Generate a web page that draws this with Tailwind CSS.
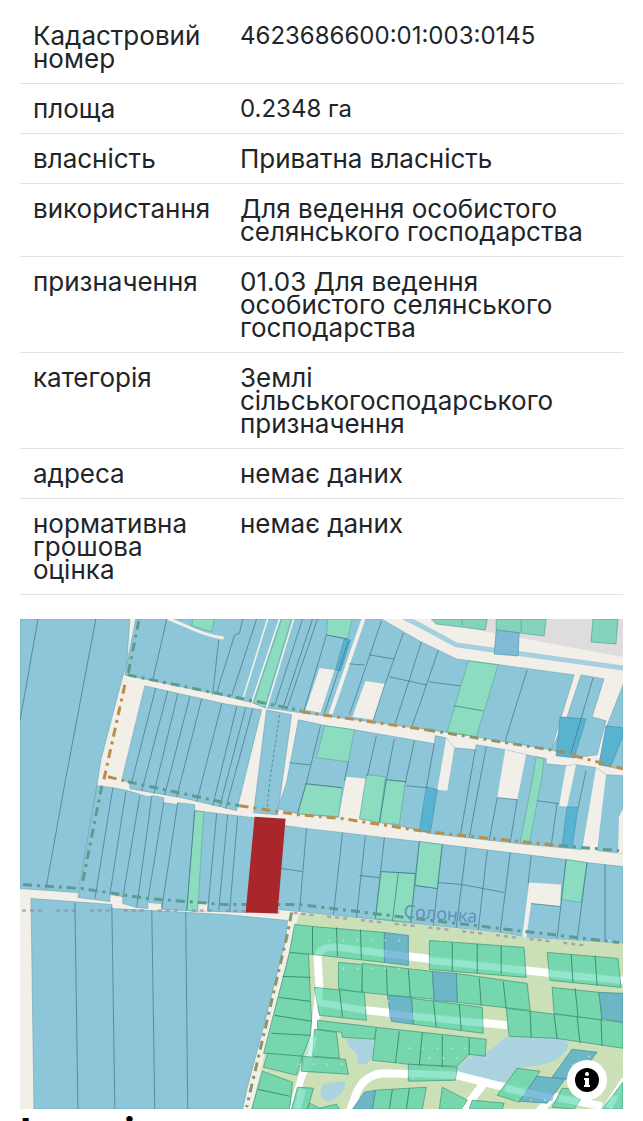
<!DOCTYPE html>
<html lang="uk">
<head>
  <meta charset="UTF-8" />
  <meta name="viewport" content="width=device-width, initial-scale=1.0" />
  <title>Кадастрова ділянка 4623686600:01:003:0145</title>
  <script src="https://cdn.jsdelivr.net/npm/@tailwindcss/browser@4"></script>
</head>
<body class="bg-white text-[#212529] font-['Inter','Noto_Sans',sans-serif] overflow-x-hidden">

  <main class="px-5 pt-[11px]">

    <!-- Parcel details -->
    <table class="w-full text-left text-[26px] leading-[23px]">
      <tbody>
        <tr class="border-b border-[#dee2e6]">
          <th scope="row" class="w-[207px] px-[13px] py-[13px] align-top font-normal">Кадастровий номер</th>
          <td class="px-[13px] py-[13px] align-top text-2xl leading-[23px]">4623686600:01:003:0145</td>
        </tr>
        <tr class="border-b border-[#dee2e6]">
          <th scope="row" class="px-[13px] py-[13px] align-top font-normal">площа</th>
          <td class="px-[13px] py-[13px] align-top text-2xl leading-[23px]">0.2348 га</td>
        </tr>
        <tr class="border-b border-[#dee2e6]">
          <th scope="row" class="px-[13px] py-[13px] align-top font-normal">власність</th>
          <td class="px-[13px] py-[13px] align-top">Приватна власність</td>
        </tr>
        <tr class="border-b border-[#dee2e6]">
          <th scope="row" class="px-[13px] py-[13px] align-top font-normal">використання</th>
          <td class="px-[13px] py-[13px] align-top">Для ведення особистого селянського господарства</td>
        </tr>
        <tr class="border-b border-[#dee2e6]">
          <th scope="row" class="px-[13px] py-[13px] align-top font-normal">призначення</th>
          <td class="px-[13px] py-[13px] align-top">01.03 Для ведення особистого селянського господарства</td>
        </tr>
        <tr class="border-b border-[#dee2e6]">
          <th scope="row" class="px-[13px] py-[13px] align-top font-normal">категорія</th>
          <td class="px-[13px] py-[13px] align-top">Землі сільськогосподарського призначення</td>
        </tr>
        <tr class="border-b border-[#dee2e6]">
          <th scope="row" class="px-[13px] py-[13px] align-top font-normal">адреса</th>
          <td class="px-[13px] py-[13px] align-top">немає даних</td>
        </tr>
        <tr class="border-b border-[#dee2e6]">
          <th scope="row" class="px-[13px] py-[13px] align-top font-normal">нормативна грошова оцінка</th>
          <td class="px-[13px] py-[13px] align-top">немає даних</td>
        </tr>
      </tbody>
    </table>

    <!-- Map -->
    <div class="relative mt-6">
      <svg class="block w-full" viewBox="20 618 604 491" role="img" aria-label="Карта ділянки">
        <rect x="20" y="618" width="604" height="491" fill="#f2efe9" />

        <!-- Settlement and river in the north-east -->
        <path d="M462 618H624V656L468 627Z" fill="#dddddd" />
        <path d="M404 616L420 624L457 644L624 667" fill="none" stroke="#a6d0df" stroke-width="5" />
        <g fill="#83d3bd" stroke="#4b9a8d" stroke-width=".6">
          <path d="M432 618H488L486 629L437 623Z" />
          <path d="M497 618H547L545 635L497 629Z" />
          <path d="M594 618H619L617 643L592 641Z" />
          <path d="M463 618V625M522 618V631" />
        </g>
        <path d="M497 629L520 632L519 655L495 653Z" fill="#7fbbd4" stroke="#4b8fa8" stroke-width=".6" />

        <!-- Fields -->
        <g fill="#8cc6d8" stroke="#6aa3b4" stroke-width=".6">
          <path d="M20 618H130L127 662L123 675L101 759L97 785L78 892L20 888Z" />
          <path d="M136 618H382L420 640L457 658L575 674L552 749L477 736L430 729L357 719L302 712L267 707L253 702L225 695L125 674Z" />
          <path d="M582 674L605 678L593 716L607 720L598 754L575 757L552 749L568 716Z" />
          <path d="M624 684L608 725L600 764L624 769Z" />
          <path d="M145 685L225 703L262 709L237 810L225 807L182 797L130 788V782L122 779Z" />
          <path d="M267 709L292 714L278 814L254 812Z" />
          <path d="M299 719L327 725L355 729L430 742L435 743L436 735L447 737L455 747L476 749L477 744L506 749L527 754L547 758V763L567 765L577 764L597 767L607 774L624 775V853L598 850L583 849L520 843L432 833L400 825L360 818L343 817L298 813L278 808L287 782Z" />
          <path d="M97 785L113 787L128 790L148 796L153 795L164 797V802L178 804V802L195 804V810L204 811L253 817L286 825L307 828L343 832L385 837L420 841L510 852L567 859L587 862L624 866V943L577 940L528 937L500 932L412 923L377 919L335 915L300 911L278 909L246 912L187 910L162 909V903L148 902V908L137 907L123 903V896L110 894V901L78 897Z" />
          <path d="M31 898L112 904V908L225 914L288 920L286 940L280 963L263 1030L247 1090L243 1109H34Z" />
        </g>

        <!-- Gaps between parcels -->
        <g fill="#f2efe9">
          <path d="M320 667L335 669L321 712L306 709Z" />
          <path d="M366 680L386 683L374 719L353 716Z" />
          <path d="M362 618H366L333 714L329 713Z" />
          <path d="M447 737L455 747L448 790L438 789Z" />
          <path d="M506 749L527 754L518 799L498 797Z" />
          <path d="M567 765L577 764L568 806L560 805Z" />
          <path d="M597 767L607 774L598 851L583 850Z" />
          <path d="M347 776L367 778L360 819L339 817Z" />
          <path d="M530 882L562 884L561 906L532 903L527 938L523 937Z" />
          <path d="M198 903H208V911H198Z" />
          <path d="M624 808L620 816L619 853H624Z" />
        </g>
        <path d="M165 616C185 624 205 635 224 637" fill="none" stroke="#f2efe9" stroke-width="3" />
        <path d="M280 618L252 702M294 618L267 707M268 618L243 699" fill="none" stroke="#f2efe9" stroke-width="1.6" />

        <!-- Green parcels -->
        <g fill="#8cdcc0" stroke="#5ba596" stroke-width=".6">
          <path d="M193 618H215L212 631L192 625Z" />
          <path d="M282 618H292L265 707L254 702Z" />
          <path d="M328 618H353L348 638L327 634Z" />
          <path d="M469 660L499 664L477 736L448 731Z" />
          <path d="M325 725L355 729L349 761L317 757Z" />
          <path d="M306 783L343 787L339 816L298 813Z" />
          <path d="M367 774L386 776L380 822L360 818Z" />
          <path d="M387 779L406 781L400 824L380 822Z" />
          <path d="M537 756L545 758L543 775L530 844L521 842L534 775Z" />
          <path d="M195 810L204 811L198 911L187 910Z" />
          <path d="M382 871L416 873L412 922L376 918Z" />
          <path d="M420 841L443 844L438 888L416 885Z" />
          <path d="M567 859L588 862L582 902L562 899Z" />
        </g>

        <!-- Overlapping parcels -->
        <g fill="#58b3d1" stroke="#3f8fae" stroke-width=".6">
          <path d="M345 638L351 639L341 670L336 669Z" />
          <path d="M561 716L587 718L575 757L557 755Z" />
          <path d="M607 725L624 727V735L612 765L600 764Z" />
          <path d="M427 786L438 789L431 832L420 830Z" />
          <path d="M568 806L579 807L573 847L563 846Z" />
        </g>

        <!-- Parcel borders -->
        <g fill="none" stroke="#3f7385" stroke-width=".7">
          <path d="M38 618L20 720M96 618L65 782L46 888" />
          <path d="M167 618L153 679M219 639L213 694M243 618L240 632L235 634L220 682L217 693M257 618L232 695M303 618L275 705M313 618L283 708M318 618L287 709M327 634L304 711M349 640L325 712M327 634L348 638" />
          <path d="M382 620L350 714M404 632L385 685L374 719M422 641L410 679L395 725M439 649L420 705L412 727M370 654L395 658M350 663L365 664M390 676L427 684M430 681L461 685M455 705L484 710M528 669L506 740M594 677L572 752" />
          <path d="M156 687L132 781M168 690L142 790M178 693L154 793M190 696L165 794M202 698L177 796M222 703L197 801M237 706L213 805M253 708L226 808M246 707L220 806" />
          <path d="M280 714L270 782L267 813" stroke-dasharray="3 2" />
          <path d="M290 762L310 764M321 725L307 782L298 813M349 761L345 780M306 783L343 787M377 735L368 775M395 738L387 779L380 822M415 740L406 782M387 779L407 781M407 785L427 787M435 743L427 787" />
          <path d="M476 749L461 835M487 746L470 837M498 797L490 840M518 799L511 842M538 800L560 803M558 803L552 846M587 770L579 807M498 797L518 799" />
          <path d="M113 787L95 898M126 791L110 894M140 795L123 897M152 796L137 906M164 802L148 900M178 802L162 908M195 810L187 910M217 813L208 910M228 814L219 910M238 816L230 911" />
          <path d="M307 828L300 910M282 868L303 871M343 832L334 914M366 835L357 917M385 837L376 918M360 875L380 877M382 871L416 873M399 872L393 921M420 841L411 922M416 885L438 888" />
          <path d="M443 844L434 925M467 847L457 927M488 850L479 930M511 852L501 932M439 882L463 884L505 892M532 855L529 883M588 862L578 940M567 859L558 938M606 864V941M532 903L561 906" />
          <path d="M75 902L78 1109M112 906L115 1109M152 910L155 1109M186 911L188 1109" />
        </g>

        <!-- Village -->
        <path d="M300 912L412 923L500 932L528 937L624 943V1109H252L292 940Z" fill="#cce0b8" />
        <g fill="#aad3df">
          <path d="M458 1068L472 1055L487 1053L508 1036L563 1038Q572 1042 567 1051Q558 1062 540 1065L518 1068L503 1085L460 1072Z" />
          <path d="M346 1038L374 1040L373 1057Q367 1067 357 1063Q361 1053 350 1048Z" />
          <path d="M323 1085Q334 1080 346 1082Q345 1095 330 1101Q320 1099 321 1093Z" />
        </g>
        <g fill="none" stroke="#ffffff" stroke-width="8" stroke-linejoin="round">
          <path d="M624 980L527 970L410 956L340 947Q319 944 318 957L320 987L317 1017" />
          <path d="M317 1013L312 1053L302 1077L292 1112" stroke-width="7" />
          <path d="M318 1002L367 1010L440 1018L508 1025" />
          <path d="M350 1112L357 1093Q365 1074 385 1073L457 1075L497 1085L603 1106" />
          <path d="M484 1084L463 1111M556 1094L540 1111M626 1080L605 1112" />
        </g>

        <g fill="#66d3aa" fill-opacity=".85" stroke="#3a9577" stroke-width=".7">
          <path d="M295 924L313 926L385 932V962L313 954L290 952Z" />
          <path d="M430 940L525 947L527 977L430 969Z" />
          <path d="M548 952L619 958L622 987L551 980Z" />
          <path d="M290 952L309 954L311 1000L312 1020L311 1035L303 1056L264 1053Z" />
          <path d="M268 1053L303 1056L297 1075L264 1067Z" />
          <path d="M263 1071L293 1082L290 1109H252Z" />
          <path d="M339 962L363 964L362 993L339 988Z" />
          <path d="M363 963L433 971L435 999L363 992Z" />
          <path d="M457 973L528 983L531 1010L458 1002Z" />
          <path d="M553 987L600 992L603 1020L555 1013Z" />
          <path d="M315 987L365 992L367 1020L320 1015Z" />
          <path d="M412 998L483 1007L484 1033L414 1024Z" />
          <path d="M507 1008L557 1014L624 1022V1048L557 1038L510 1036Z" />
          <path d="M318 1020L377 1027L375 1039L343 1037L342 1032L318 1029Z" />
          <path d="M315 1029L337 1032L340 1058L313 1056Z" />
          <path d="M377 1027L487 1039L486 1056L470 1054L458 1066L409 1064L373 1060Z" />
          <path d="M409 1064L458 1067L456 1080L409 1081Z" />
          <path d="M303 1056L346 1059L349 1074L302 1071Z" />
          <path d="M298 1087L314 1088L308 1109H292Z" />
          <path d="M310 1103L320 1108L337 1104L340 1109H308Z" />
          <path d="M376 1090L427 1087L423 1109H373Z" />
          <path d="M443 1087L468 1100L462 1109H440Z" />
          <path d="M473 1100L505 1103L503 1109H470Z" />
          <path d="M518 1068L541 1071L520 1102L498 1095Z" />
          <path d="M563 1088L587 1090L575 1109L553 1107Z" />
          <path d="M624 1082V1109H603Z" />
        </g>
        <g fill="#6cb6c6" stroke="#3f8a9a" stroke-width=".7">
          <path d="M385 932L409 935V965L385 962Z" />
          <path d="M433 971L457 973L458 1002L435 1000Z" />
          <path d="M600 992L624 993V1022L603 1018Z" />
          <path d="M388 995L412 997L414 1024L392 1021Z" />
          <path d="M365 1092L376 1090L373 1109H353Z" />
          <path d="M538 1076L566 1079L548 1103L520 1101Z" />
          <path d="M573 1049L598 1052L577 1080L553 1077Z" />
        </g>

        <!-- Streets seen through the parcels -->
        <g fill="none" stroke="#a5efdc" stroke-opacity=".55" stroke-width="7">
          <path d="M319 955Q320 946 340 947L385 953M430 960L526 970M549 973L621 980" />
          <path d="M319 988L320 1002L366 1010M413 1016L484 1023M409 1073L457 1075M303 1089L298 1109M314 1036L309 1056" />
          <path d="M506 1088L526 1093M560 1098L580 1102M616 1096L610 1108" />
        </g>
        <path d="M385 953L409 956M390 1013L413 1016M526 1092L554 1098" fill="none" stroke="#86bfe0" stroke-opacity=".8" stroke-width="7" />

        <g fill="none" stroke="#2f7d66" stroke-width=".8">
          <path d="M313 926V954M337 927L338 956M361 929L362 959M453 942V971M478 943V973M502 945V974M572 954L574 982M596 955L598 985" />
          <path d="M283 976L311 977M279 997L311 1001M275 1015L312 1021M272 1033L311 1035M258 1089L290 1096" />
          <path d="M387 967L388 994M409 969L411 997M480 978L482 1005M504 981L507 1008M576 988L579 1016M340 989L343 1017M434 1000L437 1027M460 1004L462 1030" />
          <path d="M531 1011L532 1037M555 1014L558 1039M578 1016L581 1043M602 1019L603 1046M400 1031L396 1063M423 1032L420 1065M443 1035V1067M470 1038V1055M393 1089L390 1109M410 1088L407 1109" />
        </g>

        <!-- Trees -->
        <g fill="none" stroke="#dcebc9" stroke-opacity=".7" stroke-width="2" stroke-linecap="round" stroke-dasharray="0 14">
          <path d="M330 940H620M330 968H430M540 978V1010M375 1001H400M300 1064H400M410 1048H480M330 1078H420M430 1058H500M560 1065H620M590 1056H620M490 1100H550" />
        </g>

        <!-- Tracks -->
        <g fill="none" stroke-width="3" stroke-dasharray="9 5 3 5">
          <g stroke="#5f9a90">
            <path d="M139 620L128 674M102 785L82 885M128 674L225 694L302 710M128 781L225 802L240 805" />
            <path d="M23 884L82 888L148 898L225 904L300 904L407 917L620 942" />
            <path d="M560 845L620 850" />
          </g>
          <g stroke="#8a966a">
            <path d="M427 729L575 753M292 912L288 933L247 1107" />
          </g>
          <g stroke="#bb8d48">
            <path d="M125 684L104 779M302 711L427 729M575 755L624 768M108 776L128 781" />
            <path d="M240 805L298 814L343 818L427 831L560 845" />
          </g>
        </g>
        <path d="M22 910H225L290 912L430 927L587 945" fill="none" stroke="#8f8bab" stroke-opacity=".65" stroke-width="2.5" stroke-dasharray="4 4 4 4 4 14" />

        <text x="404" y="917" transform="rotate(4 404 917)" fill="#5f93bd" font-family="Noto Sans, sans-serif" font-size="18">Солонка</text>

        <!-- Selected parcel -->
        <path d="M255 816L286 818L278 913L246 912Z" fill="#a9262b" />
      </svg>

      <button type="button" aria-label="Інформація" class="absolute right-4 bottom-[9px] flex size-10 items-center justify-center rounded-full bg-white">
        <svg class="size-6" viewBox="0 0 24 24" aria-hidden="true">
          <circle cx="12" cy="12" r="12" fill="#000" />
          <circle cx="12" cy="6" r="2" fill="#fff" />
          <path d="M9 10H14V17H15V19H9V17H10V12H9Z" fill="#fff" />
        </svg>
      </button>
    </div>

    <h2 class="mt-1 text-[40px] leading-none font-bold text-black">Історія</h2>
  </main>

</body>
</html>
